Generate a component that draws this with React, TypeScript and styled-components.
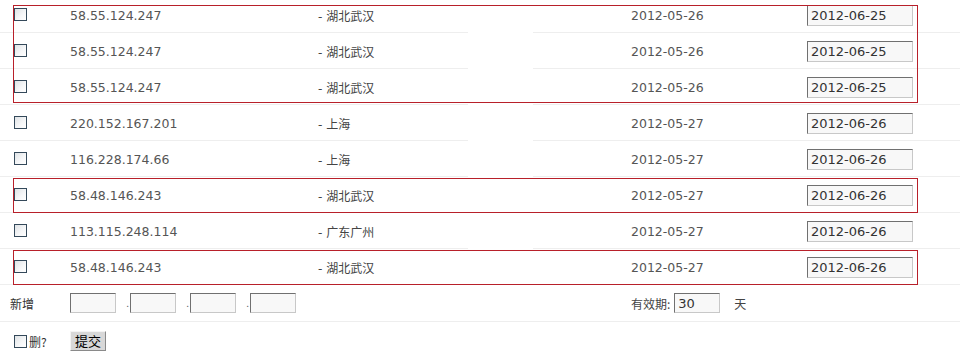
import React from "react"
import styled, { createGlobalStyle } from "styled-components"

interface Record {
  ip: string
  region: string
  created: string
  expires: string
}

const records: Record[] = [
  { ip: "58.55.124.247", region: "湖北武汉", created: "2012-05-26", expires: "2012-06-25" },
  { ip: "58.55.124.247", region: "湖北武汉", created: "2012-05-26", expires: "2012-06-25" },
  { ip: "58.55.124.247", region: "湖北武汉", created: "2012-05-26", expires: "2012-06-25" },
  { ip: "220.152.167.201", region: "上海", created: "2012-05-27", expires: "2012-06-26" },
  { ip: "116.228.174.66", region: "上海", created: "2012-05-27", expires: "2012-06-26" },
  { ip: "58.48.146.243", region: "湖北武汉", created: "2012-05-27", expires: "2012-06-26" },
  { ip: "113.115.248.114", region: "广东广州", created: "2012-05-27", expires: "2012-06-26" },
  { ip: "58.48.146.243", region: "湖北武汉", created: "2012-05-27", expires: "2012-06-26" },
]

// highlighted groups drawn over the list: [top, height]
const marks: [number, number][] = [
  [8, 96],
  [181, 33],
  [253, 33],
]

const GlobalStyle = createGlobalStyle`
  body {
    margin: 0;
    background: #fff;
    font-family: "DejaVu Sans", "Noto Sans CJK SC", sans-serif;
    font-size: 12.5px;
    color: #555;
    overflow: hidden;
  }
`

const StyledPage = styled.div`
  position: relative;
  margin-top: -3px;
  width: 960px;
`

const StyledRow = styled.div`
  display: grid;
  grid-template-columns: 70px 248px 150px 65px 98px 176px 1fr;
  height: 36px;
`

const StyledCell = styled.div<{ $gap?: boolean }>`
  display: flex;
  align-items: center;
  padding-top: 2px;
  box-sizing: border-box;
  border-bottom: 1px solid ${(p) => (p.$gap ? "transparent" : "#eeeeee")};
`

const StyledCheckCell = styled(StyledCell)`
  padding-left: 14px;
  align-items: flex-start;
  padding-top: 11px;
`

const StyledCheck = styled.span`
  display: inline-block;
  width: 11px;
  height: 11px;
  border: 1px solid #34495a;
  background: linear-gradient(135deg, #dfe3e6 0%, #f6f7f8 60%, #ffffff 100%);
`

const StyledRegion = styled.span`
  font-family: "DejaVu Sans", "Noto Sans CJK SC", sans-serif;
  font-size: 12px;
  color: #444;
`

const StyledDateInput = styled.div`
  width: 106px;
  height: 21px;
  box-sizing: border-box;
  border: 1px solid #c8c8c8;
  border-top-color: #707070;
  border-left-color: #707070;
  background: #f8f8f8;
  color: #333;
  padding-left: 3px;
  font-size: 13px;
  line-height: 20px;
`

const StyledMark = styled.div`
  position: absolute;
  left: 13px;
  width: 903px;
  border: 1px solid #b8202a;
  pointer-events: none;
`

const StyledAddRow = styled.div`
  display: grid;
  grid-template-columns: 70px 561px 1fr;
  height: 36px;
  align-items: center;
  border-bottom: 1px solid #eeeeee;
  font-family: "Noto Sans CJK SC", sans-serif;
  font-size: 12px;
  color: #333;
`

const StyledLabel = styled.span`
  padding-left: 10px;
`

const StyledIpInputs = styled.div`
  display: flex;
  align-items: center;
`

const StyledSmallInput = styled.div<{ $width: number }>`
  width: ${(p) => p.$width}px;
  height: 20px;
  box-sizing: border-box;
  border: 1px solid #c8c8c8;
  border-top-color: #707070;
  border-left-color: #707070;
  background: #f8f8f8;
  color: #333;
  padding-left: 3px;
  font-family: "DejaVu Sans", sans-serif;
  font-size: 13px;
  line-height: 19px;
`

const StyledDot = styled.span`
  width: 14px;
  text-align: right;
  color: #666;
  font-size: 10px;
  line-height: 20px;
  padding-right: 1px;
  box-sizing: border-box;
`

const StyledExpiry = styled.div`
  display: flex;
  align-items: center;
  gap: 4px;
  color: #444;
`

const StyledUnit = styled.span`
  margin-left: 10px;
`

const StyledSubmitRow = styled.div`
  display: grid;
  grid-template-columns: 70px 1fr;
  height: 38px;
  align-items: center;
  font-family: "Noto Sans CJK SC", sans-serif;
  font-size: 12px;
  color: #333;
`

const StyledDelete = styled.label`
  display: flex;
  align-items: center;
  padding-left: 14px;
  gap: 2px;
`

const StyledButton = styled.button`
  width: 36px;
  height: 20px;
  padding: 0;
  background: #d8d8d8;
  border: 1px solid #f4f4f4;
  border-right-color: #8a8a8a;
  border-bottom-color: #8a8a8a;
  font-family: "Noto Sans CJK SC", sans-serif;
  font-size: 13px;
  line-height: 18px;
  color: #000;
`

const App: React.FC = () => {
  return (
    <StyledPage>
      <GlobalStyle />
      {records.map((r, i) => (
        <StyledRow key={i}>
          <StyledCheckCell>
            <StyledCheck />
          </StyledCheckCell>
          <StyledCell>{r.ip}</StyledCell>
          <StyledCell>
            <StyledRegion>- {r.region}</StyledRegion>
          </StyledCell>
          <StyledCell $gap />
          <StyledCell />
          <StyledCell>{r.created}</StyledCell>
          <StyledCell>
            <StyledDateInput>{r.expires}</StyledDateInput>
          </StyledCell>
        </StyledRow>
      ))}
      <StyledAddRow>
        <StyledLabel>新增</StyledLabel>
        <StyledIpInputs>
          <StyledSmallInput $width={46} />
          <StyledDot>.</StyledDot>
          <StyledSmallInput $width={46} />
          <StyledDot>.</StyledDot>
          <StyledSmallInput $width={46} />
          <StyledDot>.</StyledDot>
          <StyledSmallInput $width={46} />
        </StyledIpInputs>
        <StyledExpiry>
          有效期:
          <StyledSmallInput $width={46}>30</StyledSmallInput>
          <StyledUnit>天</StyledUnit>
        </StyledExpiry>
      </StyledAddRow>
      <StyledSubmitRow>
        <StyledDelete>
          <StyledCheck />
          删?
        </StyledDelete>
        <div>
          <StyledButton type="button">提交</StyledButton>
        </div>
      </StyledSubmitRow>
      {marks.map(([top, height], i) => (
        <StyledMark key={i} style={{ top, height }} />
      ))}
    </StyledPage>
  )
}

export default App
